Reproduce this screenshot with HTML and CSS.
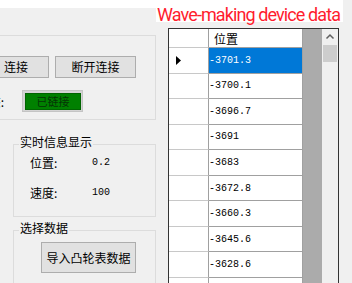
FILE: index.html
```html
<!DOCTYPE html>
<html lang="zh-CN">
<head>
  <meta charset="UTF-8" />
  <title>造波设备</title>
  <link rel="stylesheet" href="styles.css">
</head>
<body>
  <div class="window">
    <div class="left">
      <div class="top-strip"></div>

      <!-- 连接 -->
      <div class="group conn">
        <div class="btn-row">
          <button class="btn btn-connect">连接</button>
          <button class="btn btn-disconnect">断开连接</button>
        </div>
        <div class="status-row">
          <div class="status-label"><span>连接状态:</span></div>
          <div class="status-box"><span class="status-on">已链接</span></div>
        </div>
      </div>

      <!-- 实时信息 -->
      <div class="group info">
        <span class="caption">实时信息显示</span>
        <div class="info-row first"><span class="info-key">位置:</span><span class="info-val">0.2</span></div>
        <div class="info-row"><span class="info-key">速度:</span><span class="info-val">100</span></div>
      </div>

      <!-- 选择数据 -->
      <div class="group pick">
        <span class="caption">选择数据</span>
        <button class="btn btn-import">导入凸轮表数据</button>
      </div>
    </div>

    <div class="right">
      <div class="title">Wave-making device data</div>
      <div class="grid">
        <div class="grid-body">
          <div class="grid-row head"><div class="rh"></div><div class="cell">位置</div></div>
          <div class="grid-row current">
            <div class="rh"><svg width="5" height="9" viewBox="0 0 5 9"><polygon points="0,0 5,4.5 0,9" fill="#000"/></svg></div>
            <div class="cell">-3701.3</div>
          </div>
          <div class="grid-row"><div class="rh"></div><div class="cell">-3700.1</div></div>
          <div class="grid-row"><div class="rh"></div><div class="cell">-3696.7</div></div>
          <div class="grid-row"><div class="rh"></div><div class="cell">-3691</div></div>
          <div class="grid-row"><div class="rh"></div><div class="cell">-3683</div></div>
          <div class="grid-row"><div class="rh"></div><div class="cell">-3672.8</div></div>
          <div class="grid-row"><div class="rh"></div><div class="cell">-3660.3</div></div>
          <div class="grid-row"><div class="rh"></div><div class="cell">-3645.6</div></div>
          <div class="grid-row"><div class="rh"></div><div class="cell">-3628.6</div></div>
          <div class="grid-row"><div class="rh"></div><div class="cell"></div></div>
        </div>
        <div class="vscroll">
          <svg class="arrow" width="16" height="16" viewBox="0 0 16 16"><polyline points="4.5,9.5 8,6 11.5,9.5" fill="none" stroke="#606060" stroke-width="1.5"/></svg>
          <div class="thumb"></div>
        </div>
      </div>
    </div>
  </div>
</body>
</html>
```

FILE: styles.css
```css
* { box-sizing: border-box; }
body { margin: 0; background: #f0f0f0; font-family: "Noto Sans CJK SC", sans-serif; font-size: 12px; color: #000; }
.window { display: flex; width: 352px; height: 283px; overflow: hidden; }

/* left side */
.left { width: 156px; flex: none; }
.top-strip { height: 8px; background: #fff; }
.group { border: 1px solid #dcdcdc; }
.caption { display: block; width: max-content; margin: -10px 0 0 5px; padding: 0 1px; background: #f0f0f0; line-height: 14px; }

.btn { height: 22px; padding: 0; border: 1px solid #adadad; background: #e1e1e1; font-family: "Noto Sans CJK SC", sans-serif; font-size: 12px; line-height: 20px; color: #000; }

.conn { margin: 27px 0 0 -40px; width: 196px; height: 85px; padding: 20px 0 0 22px; }
.btn-row { display: flex; gap: 6px; }
.btn-connect { width: 66px; }
.btn-disconnect { width: 81px; }
.status-row { display: flex; align-items: center; margin-top: 12px; }
.status-label { width: 21px; display: flex; justify-content: flex-end; white-space: nowrap; }
.status-box { width: 61px; height: 22px; margin-left: 18px; padding: 2px 1px 1px 2px; background: #d4d4d4; border: 1px solid #c4c4c4; }
.status-on { display: block; height: 100%; background: #008000; border: 1px solid #006400; color: #063306; font-size: 11px; line-height: 14px; text-align: center; }

.info { margin: 24px 0 0 13px; width: 143px; height: 73px; }
.info-row { display: flex; height: 16px; line-height: 16px; margin: 14px 0 0 16px; }
.info-row.first { margin-top: 6px; }
.info-key { width: 62px; }
.info-val { font-family: "Liberation Mono", monospace; font-size: 10px; }

.pick { margin: 13px 0 0 13px; width: 143px; height: 80px; }
.btn-import { display: block; width: 95px; height: 31px; margin: 7px 0 0 27px; line-height: 29px; }

/* right side */
.right { width: 196px; flex: none; }
.title { width: 187px; height: 22px; padding: 4px 0 0 1px; background: #fff; color: #ff1c2e; font-family: Roboto, sans-serif; font-size: 18px; letter-spacing: -0.9px; line-height: 22px; white-space: nowrap; }

.grid { display: flex; width: 171px; height: 262px; margin: 6px 0 0 12px; border: 1px solid #333; background: #ababab; }
.grid-body { width: 153px; flex: none; }
.grid-row { display: flex; height: 25.56px; }
.grid-row.head { height: 19px; }
.rh { width: 40px; display: flex; align-items: center; padding-left: 7px; background: #fff; border-right: 1px solid #a0a0a0; border-bottom: 1px solid #c8c8c8; }
.cell { width: 94px; display: flex; align-items: center; background: #fff; border-right: 1px solid #a0a0a0; border-bottom: 1px solid #a0a0a0; font-family: "Liberation Mono", monospace; font-size: 10px; }
.head .cell { padding-left: 5px; font-family: "Noto Sans CJK SC", sans-serif; font-size: 12px; }
.current .cell { background: #0078d7; color: #fff; }

.vscroll { width: 16px; flex: none; background: #f0f0f0; }
.arrow { display: block; }
.thumb { width: 14px; height: 17px; margin-left: 1px; background: #cdcdcd; }
```
